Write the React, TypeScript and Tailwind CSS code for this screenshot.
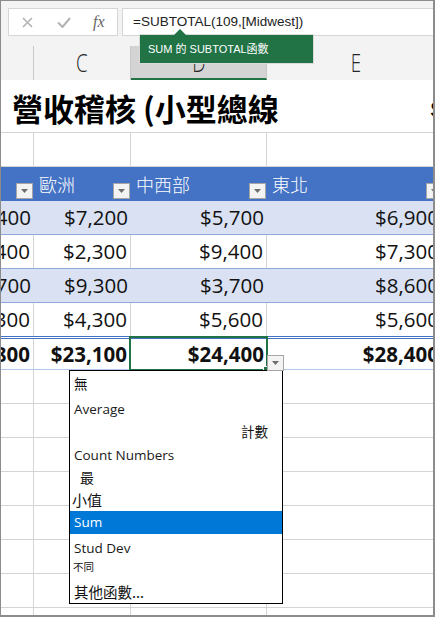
const ROWS = [
  { b: '$8,400', c: '$7,200', d: '$5,700', e: '$6,900', band: true, last: false, h: 'h-[34px]' },
  { b: '$6,400', c: '$2,300', d: '$9,400', e: '$7,300', band: false, last: false, h: 'h-[34px]' },
  { b: '$3,700', c: '$9,300', d: '$3,700', e: '$8,600', band: true, last: false, h: 'h-[34px]' },
  { b: '$2,300', c: '$4,300', d: '$5,600', e: '$5,600', band: false, last: true, h: 'h-[33px]' },
]

const MENU_LATIN = "font-['Open_Sans','Noto_Sans_CJK_TC',sans-serif] text-[13.5px] text-[#1a1a1a]"
const MENU_CJK = "font-['Noto_Sans_CJK_TC',sans-serif] text-[#111]"

function FilterButton() {
  return (
    <div className="w-[17px] h-[16px] bg-[#f3f3f3] border border-[#a6a6a6] flex items-center justify-center">
      <svg width="7" height="4" viewBox="0 0 7 4">
        <path d="M0 0h7L3.5 4z" fill="#6e6e6e" />
      </svg>
    </div>
  )
}

function GridRow({ h = 'h-[34px]' }: { h?: string }) {
  return (
    <div className={`flex ${h} border-b border-[#d4d4d4] shrink-0`}>
      <div className="w-[33px] shrink-0 border-r border-[#d4d4d4]" />
      <div className="w-[97px] shrink-0 border-r border-[#d4d4d4]" />
      <div className="w-[136px] shrink-0 border-r border-[#d4d4d4]" />
      <div className="w-[177px] shrink-0 border-r border-[#d4d4d4]" />
    </div>
  )
}

export default function App() {
  const num = "font-['Open_Sans',sans-serif] text-[20.5px] text-[#111] whitespace-nowrap shrink-0"

  return (
    <div className="relative w-[435px] h-[617px] overflow-hidden bg-white border-l border-t border-r-2 border-b-2 border-[#8c8c8c] flex flex-col">
      {/* Formula bar */}
      <div className="h-[45px] shrink-0 bg-[#f3f3f3] flex pt-[7px] pl-[7px] gap-[4px]">
        <div className="w-[110px] shrink-0 h-[28px] bg-white border border-[#d6d6d6] flex items-center">
          <svg className="ml-[13px]" width="11" height="11" viewBox="0 0 11 11">
            <path d="M1 1l9 9M10 1l-9 9" stroke="#b3b3b3" strokeWidth="1.6" />
          </svg>
          <svg className="ml-[24px]" width="14" height="11" viewBox="0 0 14 11">
            <path d="M1 5.5l4.5 4.5L13 1" stroke="#b3b3b3" strokeWidth="2" fill="none" />
          </svg>
          <span className="ml-[22px] font-['Liberation_Serif',serif] italic text-[16px] text-[#666] leading-none">
            fx
          </span>
        </div>
        <div className="flex-1 h-[28px] bg-white border border-r-0 border-[#d6d6d6] flex items-center pl-[10px] font-['Liberation_Sans',sans-serif] text-[13.5px] text-[#222]">
          =SUBTOTAL(109,[Midwest])
        </div>
      </div>

      {/* Column headers */}
      <div className="h-[34px] shrink-0 bg-[#f3f3f3] flex font-['Open_Sans',sans-serif] font-light text-[25px] text-[#262626]">
        <div className="w-[33px] shrink-0 border-r border-[#c8c8c8]" />
        <div className="w-[97px] shrink-0 border-r border-[#c8c8c8] flex items-center justify-center">
          <span className="inline-block scale-x-75">C</span>
        </div>
        <div className="w-[136px] shrink-0 border-r border-[#c8c8c8] bg-[#d4d4d4] border-b-2 border-b-[#217346] flex items-center justify-center">
          <span className="inline-block scale-x-75 mt-[2px]">D</span>
        </div>
        <div className="w-[177px] shrink-0 flex items-center justify-center">
          <span className="inline-block scale-x-75">E</span>
        </div>
      </div>

      {/* Title row */}
      <div className="h-[53px] shrink-0 border-b border-[#d4d4d4] flex items-center pl-[11px] pt-[2px] overflow-hidden">
        <span className="font-['Noto_Sans_CJK_TC',sans-serif] font-bold text-[31px] text-black whitespace-nowrap leading-none">
          營收稽核 (小型總線
        </span>
        <span className="ml-auto mr-[-12px] mt-[6px] font-['Liberation_Sans',sans-serif] font-bold text-[22px] text-black leading-none">
          S
        </span>
      </div>

      <GridRow />

      {/* Table header */}
      <div className="h-[34px] shrink-0 bg-[#4472c4] flex font-['Noto_Sans_CJK_TC',sans-serif] font-light text-[18px] text-white">
        <div className="relative w-[33px] shrink-0">
          <div className="absolute right-[1px] bottom-[2px]"><FilterButton /></div>
        </div>
        <div className="relative w-[97px] shrink-0 flex items-center pl-[5px]">
          歐洲
          <div className="absolute right-[1px] bottom-[2px]"><FilterButton /></div>
        </div>
        <div className="relative w-[136px] shrink-0 flex items-center pl-[5px]">
          中西部
          <div className="absolute right-[1px] bottom-[2px]"><FilterButton /></div>
        </div>
        <div className="relative w-[177px] shrink-0 flex items-center pl-[5px]">
          東北
          <div className="absolute right-[1px] bottom-[2px]"><FilterButton /></div>
        </div>
      </div>

      {/* Data rows */}
      {ROWS.map((r) => (
        <div
          key={r.c}
          className={`flex shrink-0 ${r.h} ${r.band ? 'bg-[#d9e1f2]' : 'bg-white'} ${r.last ? '' : 'border-b border-[#8ea9db]'}`}
        >
          <div className={`w-[33px] overflow-hidden flex items-center justify-end pr-[3px] ${r.band ? '' : 'border-r border-[#d4d4d4]'} ${num}`}>
            {r.b}
          </div>
          <div className={`w-[97px] flex items-center justify-end pr-[3px] ${r.band ? '' : 'border-r border-[#d4d4d4]'} ${num}`}>
            {r.c}
          </div>
          <div className={`w-[136px] flex items-center justify-end pr-[3px] ${r.band ? '' : 'border-r border-[#d4d4d4]'} ${num}`}>
            {r.d}
          </div>
          <div className={`w-[177px] flex items-center justify-end pr-[5px] ${num}`}>{r.e}</div>
        </div>
      ))}

      {/* Total row */}
      <div className="flex shrink-0 h-[34px] bg-white border-t-[3px] border-double border-t-[#4472c4] border-b border-b-[#b4c6e7]">
        <div className={`w-[33px] overflow-hidden flex items-center justify-end pr-[3px] border-r border-[#d4d4d4] font-bold ${num}`}>
          $20,800
        </div>
        <div className={`w-[97px] flex items-center justify-end pr-[3px] border-r border-[#d4d4d4] font-bold ${num}`}>
          $23,100
        </div>
        <div className={`relative w-[136px] flex items-center justify-end pr-[3px] font-bold ${num}`}>
          $24,400
          <div className="absolute -left-[2px] -top-[3px] w-[139px] h-[35px] border-2 border-[#217346]" />
          <div className="absolute left-[132px] top-[27px] w-[6px] h-[6px] bg-[#217346] border border-white" />
          <div className="absolute left-[136px] top-[16px] z-10">
            <FilterButton />
          </div>
        </div>
        <div className={`w-[177px] flex items-center justify-end pr-[5px] font-bold ${num}`}>$28,400</div>
      </div>

      {/* Empty grid */}
      <GridRow />
      <GridRow />
      <GridRow />
      <GridRow />
      <GridRow />
      <GridRow />
      <GridRow />
      <GridRow />

      {/* Tooltip */}
      <div className="absolute left-[139px] top-[34px] w-[173px] h-[28px] bg-[#217346] shadow-[0_0_0_1px_#d9d9d9] flex items-center pl-[8px] font-['Liberation_Sans','Noto_Sans_CJK_TC',sans-serif] text-[11px] text-white whitespace-nowrap">
        <svg className="absolute left-[33px] -top-[6px]" width="14" height="7" viewBox="0 0 14 7">
          <path d="M0 7L7 0l7 7z" fill="#217346" />
        </svg>
        SUM 的 SUBTOTAL函數
      </div>

      {/* Function dropdown */}
      <div className="absolute left-[68px] top-[369px] w-[214px] h-[234px] bg-white border border-black flex flex-col">
        <div className={`h-[25px] flex items-center pl-[4px] text-[13.5px] ${MENU_CJK}`}>無</div>
        <div className={`h-[26px] flex items-center pl-[4px] ${MENU_LATIN}`}>Average</div>
        <div className={`h-[18px] flex items-center justify-end pr-[14px] text-[13.5px] ${MENU_CJK}`}>計數</div>
        <div className={`h-[30px] flex items-center pl-[4px] ${MENU_LATIN}`}>Count Numbers</div>
        <div className={`h-[14px] flex items-center pl-[10px] text-[14px] ${MENU_CJK}`}>最</div>
        <div className={`h-[27px] pt-[6px] flex items-center pl-[2px] text-[15px] ${MENU_CJK}`}>小值</div>
        <div className="h-[23px] bg-[#0078d7] flex items-center pl-[4px] font-['Open_Sans',sans-serif] text-[13.5px] text-white">
          Sum
        </div>
        <div className={`h-[28px] flex items-center pl-[4px] ${MENU_LATIN}`}>Stud Dev</div>
        <div className={`h-[11px] flex items-center pl-[3px] text-[10.5px] leading-none ${MENU_CJK}`}>不同</div>
        <div className={`h-[30px] pt-[8px] flex items-center pl-[4px] text-[14.5px] ${MENU_CJK}`}>其他函數...</div>
      </div>
    </div>
  )
}
